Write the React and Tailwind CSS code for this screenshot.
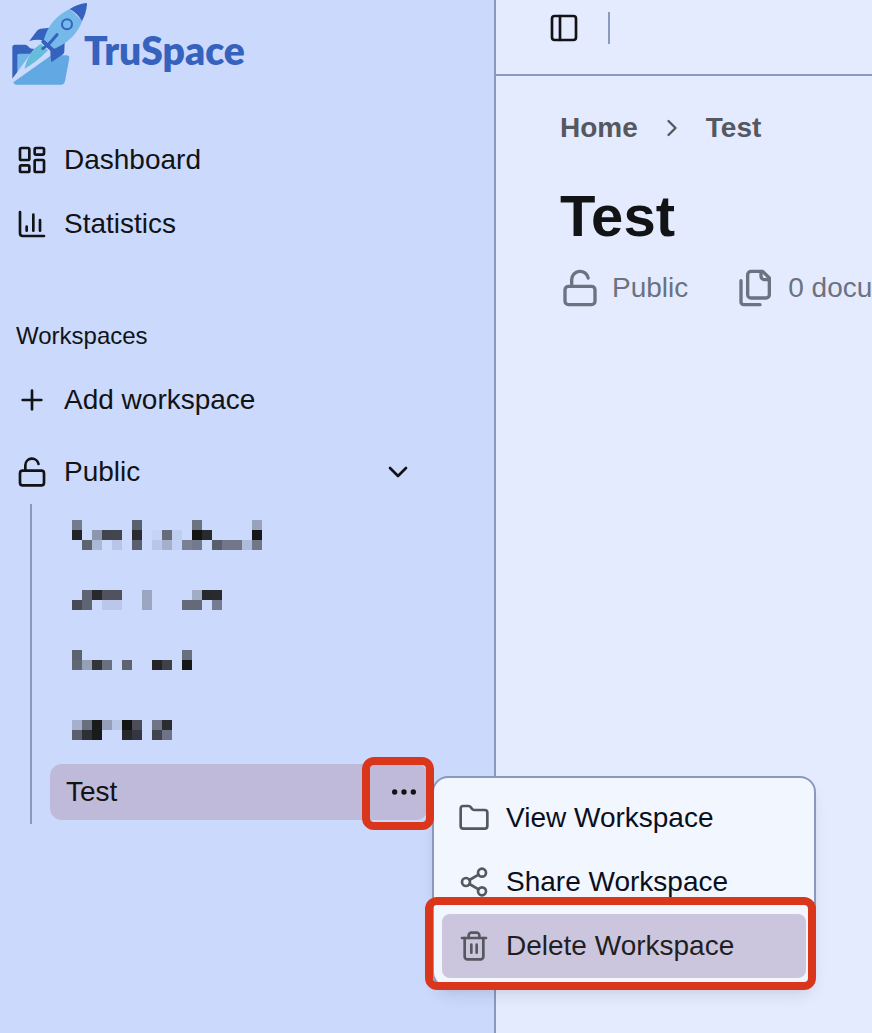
import React from 'react';
import { LayoutDashboard, ChartColumn, Plus, LockOpen, ChevronDown, ChevronRight, PanelLeft, Ellipsis, Folder, Share2 } from 'lucide-react';

const CELL = 10;

// Each cell is [column, row, colour] on a 10px grid.
const hiddenNames = [
  {
    label: 'Hidden workspace 1',
    top: 12,
    cells: [
      [0, 0, '#747b8e'], [6, 0, '#5a616e'], [12, 0, '#6b7280'], [18, 0, '#98a2bc'],
      [0, 1, '#222427'], [2, 1, '#8c96ae'], [3, 1, '#42454d'], [4, 1, '#42464d'], [6, 1, '#2a2c30'],
      [8, 1, '#c5d4f8'], [9, 1, '#666c7a'], [10, 1, '#bfcdf0'], [12, 1, '#131414'], [13, 1, '#292a2e'], [18, 1, '#161819'],
      [1, 2, '#5d636f'], [2, 2, '#aab7d5'], [4, 2, '#b8c5e6'], [6, 2, '#5a606d'], [8, 2, '#b9c6e8'], [9, 2, '#a4afcc'],
      [10, 2, '#c3d1f6'], [11, 2, '#7a8194'], [12, 2, '#737a8d'], [14, 2, '#595e6b'], [15, 2, '#727689'], [16, 2, '#727689'],
      [17, 2, '#aebbda'], [18, 2, '#727689'],
    ],
  },
  {
    label: 'Hidden workspace 2',
    top: 18,
    cells: [
      [1, 0, '#5e6472'], [2, 0, '#27292c'], [3, 0, '#50525e'], [4, 0, '#50525e'], [7, 0, '#9ba6c0'],
      [12, 0, '#a1acc7'], [13, 0, '#27292d'], [14, 0, '#292a2e'],
      [0, 1, '#484b54'], [1, 1, '#5e6471'], [3, 1, '#bac7e8'], [4, 1, '#bac7e8'], [7, 1, '#9ba6c0'],
      [11, 1, '#646a78'], [12, 1, '#646a78'], [14, 1, '#757c8f'],
    ],
  },
  {
    label: 'Hidden workspace 3',
    top: 14,
    cells: [
      [0, 0, '#5c636f'], [11, 0, '#687080'],
      [0, 1, '#606674'], [1, 1, '#959fb8'], [2, 1, '#333539'], [3, 1, '#69707e'], [5, 1, '#5d6470'],
      [8, 1, '#242528'], [9, 1, '#3e4147'], [11, 1, '#151718'],
    ],
  },
  {
    label: 'Hidden workspace 4',
    top: 20,
    cells: [
      [0, 0, '#a5b0cd'], [1, 0, '#686f7e'], [2, 0, '#181a1b'], [3, 0, '#959fb7'], [4, 0, '#b8c5e5'], [5, 0, '#131414'],
      [6, 0, '#4b4e59'], [8, 0, '#6f7486'], [9, 0, '#2b2c30'],
      [0, 1, '#5b606e'], [1, 1, '#2d3036'], [2, 1, '#191b1b'], [5, 1, '#26282b'], [6, 1, '#353740'],
      [8, 1, '#41444e'], [9, 1, '#6e7486'],
    ],
  },
];

function Mosaic({ cells, top, label }) {
  return (
    <svg role="img" aria-label={label} width="200" height="56" shapeRendering="crispEdges">
      {cells.map(([col, row, fill]) => (
        <rect key={`${col}-${row}`} x={6 + col * CELL} y={top + row * CELL} width={CELL} height={CELL} fill={fill} />
      ))}
    </svg>
  );
}

function LogoMark() {
  return (
    <svg viewBox="24 0 228 264" className="h-[88px] w-[76px] shrink-0 overflow-visible" aria-hidden="true">
      <path d="M37 236V142q0-8 8-8h30q5 0 8 4l6 5q3 3 8 3h12l-30 50Z" fill="#3562bd" />
      <path d="M52 216V166q0-5 5-5h40l-20 40Z" fill="#72b7e8" />
      <path d="M41 244 146 166h53q10 0 9 9l-13 68q-2 11-12 11H48q-8 0-7-10Z" fill="#62a8e2" />
      <path d="M36 238 106 142 124 128 152 160 152 167 42 245Z" fill="#cbd9fd" />
      <path d="M73 207Q84 155 122 131L144 151Q110 186 73 207Z" fill="#65bddb" />
      <path d="M88 123 111 92q4-5 11-6l28-3-18 38q-22-4-44 2Z" fill="#3562bd" />
      <path d="M154 187q-3-14-3-36l43-26-1 30q0 4-4 8Z" fill="#3562bd" />
      <path d="M131 123Q146 58 209 27L247 62Q224 124 153 150Z" fill="#74b9e9" />
      <path d="M209 27Q233 12 258 9q4 0 3 4-2 27-15 50-13-23-37-36Z" fill="#3562bd" />
      <circle cx="201" cy="73" r="15" fill="#74b9e9" stroke="#3562bd" strokeWidth="6" />
      <g stroke="#3562bd" strokeLinecap="round" fill="none">
        <path d="M171 104 142 137" strokeWidth="9" />
        <path d="M130 125 160 152" strokeWidth="12" />
        <path d="M141 136 128 146" strokeWidth="8" />
      </g>
    </svg>
  );
}

function TrashIcon() {
  return (
    <svg viewBox="0 0 24 24" className="size-8" fill="none" stroke="currentColor" strokeWidth="2" strokeLinecap="round" strokeLinejoin="round" aria-hidden="true">
      <path d="M3 6h18" />
      <path d="M19 6v14c0 1-1 2-2 2H7c-1 0-2-1-2-2V6" />
      <path d="M8 6V4c0-1 1-2 2-2h4c1 0 2 1 2 2v2" />
      <path d="M10 11v6M14 11v6" />
    </svg>
  );
}

function FilesIcon() {
  return (
    <svg viewBox="0 0 24 24" className="size-10 shrink-0" fill="none" stroke="currentColor" strokeWidth="2" strokeLinecap="round" strokeLinejoin="round" aria-hidden="true">
      <path d="M20 7h-3a2 2 0 0 1-2-2V2" />
      <path d="M9 18a2 2 0 0 1-2-2V4a2 2 0 0 1 2-2h7l4 4v10a2 2 0 0 1-2 2Z" />
      <path d="M3 7.6v12.8A1.6 1.6 0 0 0 4.6 22h9.8" />
    </svg>
  );
}

function NavLink({ icon: Icon, children }) {
  return (
    <a href="#" className="flex h-16 items-center gap-4 px-4">
      <Icon className="size-8" />
      {children}
    </a>
  );
}

function WorkspaceMenu() {
  return (
    <div role="menu" className="absolute top-3 left-[382px] z-10 w-96 rounded-2xl border-2 border-[#8a9abd] bg-[#f2f6ff] p-2 text-[#0b0f1c] shadow-lg">
      <button role="menuitem" className="flex h-16 w-full items-center gap-4 px-4">
        <Folder className="size-8 text-[#55585e]" />
        View Workspace
      </button>
      <button role="menuitem" className="flex h-16 w-full items-center gap-4 px-4">
        <Share2 className="size-8 text-[#55585e]" />
        Share Workspace
      </button>
      <div className="relative">
        <button role="menuitem" className="flex h-16 w-full items-center gap-4 rounded-lg bg-[#cbc6de] px-4 text-[#1f1f22]">
          <span className="text-[#55585e]"><TrashIcon /></span>
          Delete Workspace
        </button>
        <div className="pointer-events-none absolute -top-[17px] -right-[10px] -bottom-3 -left-[17px] rounded-xl border-8 border-[#d9361c]" />
      </div>
    </div>
  );
}

function Sidebar() {
  return (
    <aside className="relative z-10 w-[496px] shrink-0 border-r-2 border-[#8a9abd] bg-[#cbd9fd]">
      <a href="#" className="flex h-32 items-start pl-2">
        <LogoMark />
        <span className="pt-6 font-[Lato,sans-serif] text-[39px] leading-[52px] font-extrabold text-[#3562bd]">TruSpace</span>
      </a>
      <nav>
        <NavLink icon={LayoutDashboard}>Dashboard</NavLink>
        <NavLink icon={ChartColumn}>Statistics</NavLink>
        <h2 className="mt-12 flex h-16 items-center px-4 text-2xl">Workspaces</h2>
        <button className="flex h-16 w-full items-center gap-4 px-4">
          <Plus className="size-8" />
          Add workspace
        </button>
        <div className="mt-2 mr-16">
          <button aria-expanded="true" className="flex h-16 w-full items-center gap-4 px-4">
            <LockOpen className="size-8" />
            Public
            <ChevronDown className="ml-auto size-8" />
          </button>
          <ul className="ml-[30px] flex flex-col gap-2 border-l-2 border-[#8a9abd] py-1 pl-[18px]">
            {hiddenNames.map((item) => (
              <li key={item.label} className="h-14 px-4">
                <a href="#"><Mosaic {...item} /></a>
              </li>
            ))}
            <li className="relative mr-0.5 flex h-14 items-center justify-between rounded-xl bg-[#bfbad9] pr-2 pl-4">
              <a href="#">Test</a>
              <button aria-label="Workspace actions" aria-haspopup="menu">
                <Ellipsis className="size-8" />
              </button>
              <WorkspaceMenu />
              <div className="pointer-events-none absolute -top-[7px] -right-[6px] z-20 h-[73px] w-[72px] rounded-xl border-8 border-[#d9361c]" />
            </li>
          </ul>
        </div>
      </nav>
    </aside>
  );
}

export default function App() {
  return (
    <div className="flex min-h-screen overflow-hidden bg-[#e5ebff] font-['Liberation_Sans',Arial,sans-serif] text-[28px] leading-10 text-[#121314]">
      <Sidebar />
      <div className="min-w-0 flex-1">
        <header className="flex items-center gap-[28px] border-b-2 border-[#8a9abd] pt-3 pb-[30px] pl-[52px]">
          <button aria-label="Toggle sidebar">
            <PanelLeft className="size-8" />
          </button>
          <div className="h-8 w-0.5 bg-[#8a9abd]" />
        </header>
        <main className="pt-8 pl-16">
          <nav aria-label="Breadcrumb">
            <ol className="flex items-center gap-5 font-bold text-[#55585e]">
              <li><a href="#">Home</a></li>
              <li aria-hidden="true"><ChevronRight className="size-7" /></li>
              <li><a href="#">Test</a></li>
            </ol>
          </nav>
          <h1 className="mt-8 text-[58px] leading-[72px] font-bold">Test</h1>
          <div className="mt-4 flex gap-12 whitespace-nowrap text-[#6b7280]">
            <span className="flex items-center gap-3">
              <LockOpen className="size-10 shrink-0" />
              Public
            </span>
            <span className="flex items-center gap-3">
              <FilesIcon />
              0 documents
            </span>
          </div>
        </main>
      </div>
    </div>
  );
}
